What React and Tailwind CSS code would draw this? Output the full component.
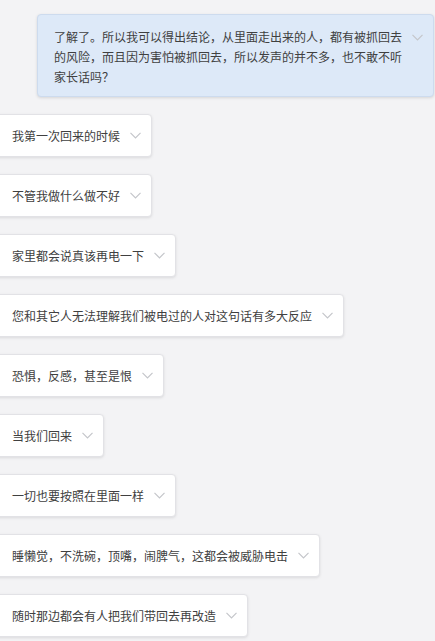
import React from 'react';

const lines = [
  '我第一次回来的时候',
  '不管我做什么做不好',
  '家里都会说真该再电一下',
  '您和其它人无法理解我们被电过的人对这句话有多大反应',
  '恐惧，反感，甚至是恨',
  '当我们回来',
  '一切也要按照在里面一样',
  '睡懒觉，不洗碗，顶嘴，闹脾气，这都会被威胁电击',
  '随时那边都会有人把我们带回去再改造',
];

const Chevron = () => (
  <svg width="11" height="7" viewBox="0 0 11 7" className="shrink-0">
    <path d="M0.5 0.8 L5.5 5.8 L10.5 0.8" fill="none" stroke="#c4c6ca" strokeWidth="1.2" />
  </svg>
);

const App = () => {
  return (
    <div
      className="w-[435px] h-[641px] overflow-hidden bg-[#f3f3f5] text-[#404040]"
      style={{ fontFamily: '"Noto Sans CJK SC", "Noto Sans", sans-serif' }}
    >
      <div className="pt-[14px]">
        <div className="ml-[37px] w-[397px] flex items-start gap-[10px] pl-[16px] pr-[10px] pt-[12px] pb-[9px] bg-[#dde9f8] border border-[#cddbee] rounded-[4px] shadow-[0_1px_3px_rgba(0,0,0,0.12)]">
          <p className="w-[350px] text-[12px] leading-[20px]">
            了解了。所以我可以得出结论，从里面走出来的人，都有被抓回去的风险，而且因为害怕被抓回去，所以发声的并不多，也不敢不听家长话吗？
          </p>
          <div className="pt-[7px]">
            <Chevron />
          </div>
        </div>
      </div>

      <div className="mt-[17px] flex flex-col items-start gap-[17px]">
        {lines.map((t) => (
          <div
            key={t}
            className="-ml-[6px] h-[43px] flex items-center gap-[10px] pl-[17px] pr-[10px] bg-white border border-[#e2e2e6] rounded-[4px] shadow-[0_1px_3px_rgba(0,0,0,0.10)]"
          >
            <span className="text-[12px] leading-[20px] whitespace-nowrap">{t}</span>
            <Chevron />
          </div>
        ))}
      </div>
    </div>
  );
};

export default App;
